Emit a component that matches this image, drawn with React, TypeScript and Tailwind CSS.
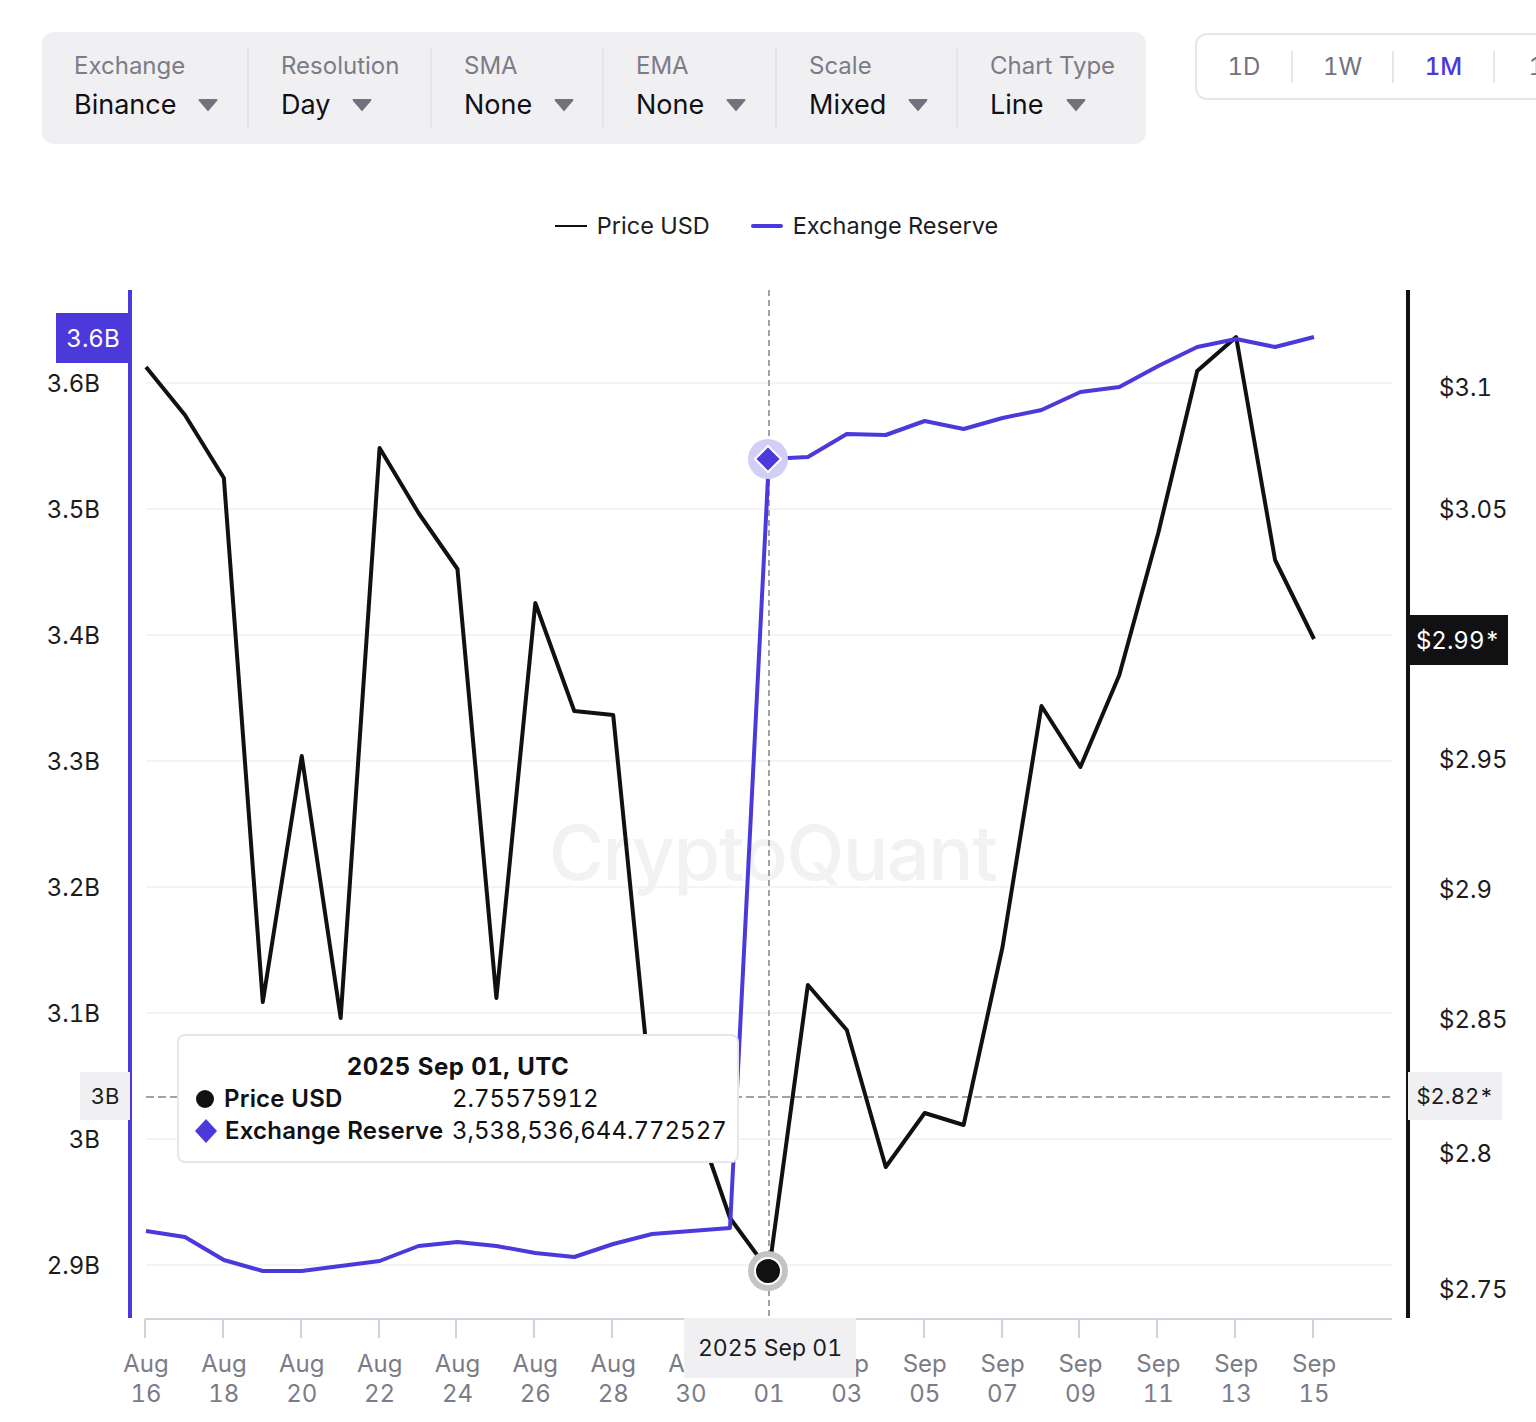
const font = "font-['Inter','Liberation_Sans',sans-serif]";

const filters = [
  { label: "Exchange", value: "Binance", width: "w-[207px]" },
  { label: "Resolution", value: "Day", width: "w-[183px]" },
  { label: "SMA", value: "None", width: "w-[172px]" },
  { label: "EMA", value: "None", width: "w-[173px]" },
  { label: "Scale", value: "Mixed", width: "w-[181px]" },
  { label: "Chart Type", value: "Line", width: "w-[157px]" },
];

const ranges = [
  { label: "1D", width: "w-[96px]" },
  { label: "1W", width: "w-[101px]" },
  { label: "1M", width: "w-[101px]", active: true },
  { label: "1Y", width: "w-[101px]" },
];

const priceLine = [
  367, 415, 478, 1002, 756, 1018, 448, 513, 569, 998, 603, 711, 715, 1105, 1105, 1218, 1271, 985, 1030, 1167, 1113,
  1125, 947, 706, 767, 675, 533, 371, 337, 560, 639,
];
const reserveLine = [
  1231, 1237, 1260, 1271, 1271, 1266, 1261, 1246, 1242, 1246, 1253, 1257, 1244, 1234, 1231, 1228, 459, 457, 434, 435,
  421, 429, 418, 410, 392, 387, 366, 347, 339, 347, 337,
];

const toPoints = (ys: number[]) => ys.map((y, i) => `${146 + (i * 1168) / 30},${y}`).join(" ");

const leftTicks = [
  { label: "3.6B", y: 383 },
  { label: "3.5B", y: 509 },
  { label: "3.4B", y: 635 },
  { label: "3.3B", y: 761 },
  { label: "3.2B", y: 887 },
  { label: "3.1B", y: 1013 },
  { label: "3B", y: 1139 },
  { label: "2.9B", y: 1265 },
];

const rightTicks = [
  { label: "$3.1", y: 388 },
  { label: "$3.05", y: 510 },
  { label: "$2.95", y: 760 },
  { label: "$2.9", y: 890 },
  { label: "$2.85", y: 1020 },
  { label: "$2.8", y: 1154 },
  { label: "$2.75", y: 1290 },
];

const dates = [
  ["Aug", "16"],
  ["Aug", "18"],
  ["Aug", "20"],
  ["Aug", "22"],
  ["Aug", "24"],
  ["Aug", "26"],
  ["Aug", "28"],
  ["Aug", "30"],
  ["Sep", "01"],
  ["Sep", "03"],
  ["Sep", "05"],
  ["Sep", "07"],
  ["Sep", "09"],
  ["Sep", "11"],
  ["Sep", "13"],
  ["Sep", "15"],
];

function Filter({ label, value, width }: { label: string; value: string; width: string }) {
  return (
    <div className={`${width} h-[80px] border-r-2 border-[#e6e6ea] pl-8 pt-px last:border-r-0`}>
      <div className="whitespace-nowrap text-[24px] leading-[34px] text-[#7c7c87]">{label}</div>
      <div className="mt-[3px] flex items-center gap-[22px] text-[27px] leading-[38px] text-[#111114]">
        {value}
        <svg width="20" height="14" viewBox="0 0 20 14">
          <path d="M1.5 1h17a1 1 0 0 1 .8 1.6l-8.5 10a1 1 0 0 1-1.6 0l-8.5-10A1 1 0 0 1 1.5 1z" fill="#72727c" />
        </svg>
      </div>
    </div>
  );
}

function Chart() {
  return (
    <div className="relative h-[1132px] w-full">
      <svg className="absolute inset-0" width="1536" height="1132" viewBox="0 290 1536 1132" fill="none">
        {leftTicks.map((t) => (
          <line key={t.y} x1="146" x2="1392" y1={t.y} y2={t.y} stroke="#f4f4f6" strokeWidth="2" />
        ))}
        <line x1="130" x2="130" y1="290" y2="1318" stroke="#4b39dc" strokeWidth="4" />
        <line x1="1408" x2="1408" y1="290" y2="1318" stroke="#111114" strokeWidth="4" />
        <line x1="145" x2="1392" y1="1319" y2="1319" stroke="#d2d2dc" strokeWidth="2" />
        {dates.map((_, i) => {
          const x = Math.round(145 + i * 77.87);
          return <line key={i} x1={x} x2={x} y1="1319" y2="1338" stroke="#d2d2dc" strokeWidth="2" />;
        })}
      </svg>
      <div className="absolute left-[549px] top-[518px] text-[75px] font-medium leading-[90px] tracking-[-1.2px] text-[#f2f2f4]">
        CryptoQuant
      </div>
      <svg className="absolute inset-0" width="1536" height="1132" viewBox="0 290 1536 1132" fill="none">
        <line x1="769" x2="769" y1="290" y2="1318" stroke="#a2a2aa" strokeWidth="2" strokeDasharray="6 4" />
        <line x1="146" x2="1392" y1="1097" y2="1097" stroke="#a2a2aa" strokeWidth="2" strokeDasharray="8 4" />
        <polyline points={toPoints(priceLine)} stroke="#111114" strokeWidth="4" strokeLinejoin="round" />
        <polyline points={toPoints(reserveLine)} stroke="#4b39dc" strokeWidth="4" strokeLinejoin="round" />
        <circle cx="768" cy="459" r="20" fill="#d2cef6" />
        <path d="M768 446l13 13-13 13-13-13z" fill="#4b39dc" stroke="#fff" strokeWidth="2" />
        <circle cx="768" cy="1271" r="20" fill="#c4c4c4" />
        <circle cx="768" cy="1271" r="13" fill="#111114" stroke="#fff" strokeWidth="2" />
      </svg>

      {leftTicks.map((t) => (
        <div
          key={t.y}
          className="absolute right-[1436px] text-[24px] leading-[30px] text-[#1c1c20]"
          style={{ top: t.y - 290 - 14 }}
        >
          {t.label}
        </div>
      ))}
      {rightTicks.map((t) => (
        <div key={t.y} className="absolute left-[1439px] text-[24px] leading-[30px] text-[#1c1c20]" style={{ top: t.y - 290 - 15 }}>
          {t.label}
        </div>
      ))}
      {dates.map(([month, day], i) => (
        <div
          key={day + month}
          className="absolute top-[1059px] w-[70px] text-center text-[24px] leading-[30px] text-[#7c7c87]"
          style={{ left: 146 + i * 77.87 - 35 }}
        >
          <div>{month}</div>
          <div>{day}</div>
        </div>
      ))}

      <div className="absolute left-[56px] top-[23px] flex h-[50px] w-[74px] items-center justify-center bg-[#4b39dc] pt-0.5 text-[24px] text-white">
        3.6B
      </div>
      <div className="absolute left-[80px] top-[782px] flex h-[48px] w-[50px] items-center justify-center bg-[#f0f0f3] text-[22px] text-[#1c1c20]">
        3B
      </div>
      <div className="absolute left-[1408px] top-[782px] flex h-[48px] w-[94px] items-center justify-center bg-[#f0f0f3] text-[22px] text-[#1c1c20]">
        $2.82*
      </div>
      <div className="absolute left-[1408px] top-[325px] flex h-[50px] w-[100px] items-center justify-center bg-[#111114] pt-0.5 text-[24px] text-white">
        $2.99*
      </div>
      <div className="absolute left-[684px] top-[1028px] flex h-[60px] w-[172px] items-center justify-center bg-[#f0f0f3] text-[23px] text-[#1c1c20]">
        2025 Sep 01
      </div>

      <div className="absolute left-[177px] top-[744px] h-[129px] w-[562px] rounded-lg border-2 border-[#e6e6ec] bg-white pl-4 pt-[15px] text-[24px] leading-[32px] text-[#111114]">
        <div className="pr-4 text-center font-bold tracking-[0.5px]">2025 Sep 01, UTC</div>
        <div className="flex items-center">
          <span className="ml-px mr-[10px] h-[18px] w-[18px] rounded-full bg-[#111114]" />
          <span className="w-[228px] font-semibold tracking-[0.2px]">Price USD</span>
          <span>2.75575912</span>
        </div>
        <div className="flex items-center">
          <svg className="mr-2" width="22" height="24" viewBox="0 0 22 24">
            <path d="M11 0l11 12-11 12L0 12z" fill="#4b39dc" />
          </svg>
          <span className="w-[227px] font-semibold tracking-[0.2px]">Exchange Reserve</span>
          <span>3,538,536,644.772527</span>
        </div>
      </div>
    </div>
  );
}

export default function App() {
  return (
    <div className={`${font} h-[1422px] w-[1536px] overflow-hidden bg-white tabular-nums`}>
      <div className="flex items-start gap-[49px] pl-[42px] pt-8">
        <div className="flex h-[112px] w-[1104px] flex-none items-center rounded-xl bg-[#f0f0f3]">
          {filters.map((f) => (
            <Filter key={f.label} {...f} />
          ))}
        </div>
        <div className="mt-px flex h-[67px] flex-none items-center rounded-xl border-2 border-[#e6e6ec] text-[24px]">
          {ranges.map((r) => (
            <div
              key={r.label}
              className={`${r.width} flex h-8 items-center justify-center border-r-2 border-[#e6e6ec] ${
                r.active ? "font-medium text-[#4b39dc]" : "text-[#72727c]"
              }`}
            >
              {r.label}
            </div>
          ))}
        </div>
      </div>

      <div className="mt-[66px] flex h-[32px] items-center justify-center gap-[41px] pl-[17px] text-[23.5px] text-[#1c1c20]">
        <div className="flex items-center gap-[10px]">
          <span className="h-0.5 w-8 bg-[#111114]" />
          Price USD
        </div>
        <div className="flex items-center gap-[10px]">
          <span className="h-1 w-8 rounded-full bg-[#4b39dc]" />
          Exchange Reserve
        </div>
      </div>

      <div className="mt-[48px]">
        <Chart />
      </div>
    </div>
  );
}
